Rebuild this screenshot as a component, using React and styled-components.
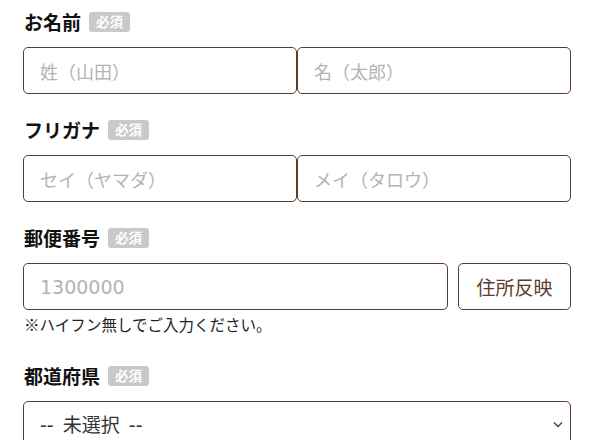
import styled, { createGlobalStyle } from "styled-components";

const GlobalStyle = createGlobalStyle`
  * { box-sizing: border-box; }
  body {
    margin: 0;
    background: #fff;
    font-family: "Noto Sans CJK JP", "Noto Sans", sans-serif;
    color: #222;
  }
`;

const BROWN = "#5b3d2c";
const LATIN = `"DejaVu Sans", "Noto Sans CJK JP", sans-serif`;

const Form = styled.form`
  width: 548px;
  margin: 10px 0 0 23px;
  display: flex;
  flex-direction: column;
`;

const Field = styled.div`
  display: flex;
  flex-direction: column;
  margin-top: ${({ $top }) => $top || 0}px;
`;

const LabelRow = styled.div`
  display: flex;
  align-items: center;
  gap: 8px;
  height: 24px;
  margin-bottom: 13px;
  padding-left: 1px;
`;

const Label = styled.label`
  font-size: 19px;
  font-weight: 700;
  line-height: 24px;
  color: #111;
`;

const Badge = styled.span`
  display: inline-flex;
  align-items: center;
  justify-content: center;
  height: 20px;
  padding: 0 7px;
  border-radius: 3px;
  background: #c9c9c9;
  color: #fff;
  font-size: 13.5px;
  font-weight: 700;
  line-height: 1;
`;

const Pair = styled.div`
  display: grid;
  grid-template-columns: 1fr 1fr;
`;

const Inline = styled.div`
  display: flex;
  gap: 10px;
`;

const Input = styled.input`
  display: block;
  width: 100%;
  height: 47px;
  margin: 0;
  border: 1px solid ${BROWN};
  border-radius: 5px;
  padding: 0 16px;
  font-family: ${({ $latin }) => ($latin ? LATIN : "inherit")};
  font-size: ${({ $latin }) => ($latin ? 19 : 18)}px;
  color: #333;
  background: #fff;
  outline: none;
  &::placeholder {
    color: #b3b3b3;
  }
`;

const Button = styled.button`
  flex: 0 0 113px;
  height: 47px;
  margin: 0;
  border: 1px solid ${BROWN};
  border-radius: 5px;
  background: #fff;
  color: ${BROWN};
  font-family: inherit;
  font-size: 19px;
  padding: 0;
`;

const Note = styled.p`
  margin: 4px 0 0 1px;
  font-size: 15.5px;
  line-height: 20px;
  color: #222;
`;

const SelectWrap = styled.div`
  position: relative;
`;

const Select = styled.select`
  display: block;
  width: 100%;
  height: 47px;
  margin: 0;
  appearance: none;
  border: 1px solid ${BROWN};
  border-radius: 5px;
  padding: 0 16px;
  font-family: ${LATIN};
  font-size: 19px;
  word-spacing: 3px;
  color: #333;
  background: #fff;
`;

const Chevron = styled.svg`
  position: absolute;
  right: 8px;
  top: 20px;
  pointer-events: none;
`;

const Required = ({ children }) => (
  <LabelRow>
    <Label>{children}</Label>
    <Badge>必須</Badge>
  </LabelRow>
);

export default function App() {
  return (
    <>
      <GlobalStyle />
      <Form>
        <Field>
          <Required>お名前</Required>
          <Pair>
            <Input placeholder="姓（山田）" />
            <Input placeholder="名（太郎）" />
          </Pair>
        </Field>
        <Field $top={24}>
          <Required>フリガナ</Required>
          <Pair>
            <Input placeholder="セイ（ヤマダ）" />
            <Input placeholder="メイ（タロウ）" />
          </Pair>
        </Field>
        <Field $top={24}>
          <Required>郵便番号</Required>
          <Inline>
            <Input $latin placeholder="1300000" />
            <Button type="button">住所反映</Button>
          </Inline>
          <Note>※ハイフン無しでご入力ください。</Note>
        </Field>
        <Field $top={30}>
          <Required>都道府県</Required>
          <SelectWrap>
            <Select defaultValue="">
              <option value="">-- 未選択 --</option>
            </Select>
            <Chevron width="10" height="7" viewBox="0 0 10 7">
              <path d="M1 1.5 L5 5.5 L9 1.5" fill="none" stroke="#444" strokeWidth="1.4" />
            </Chevron>
          </SelectWrap>
        </Field>
      </Form>
    </>
  );
}
